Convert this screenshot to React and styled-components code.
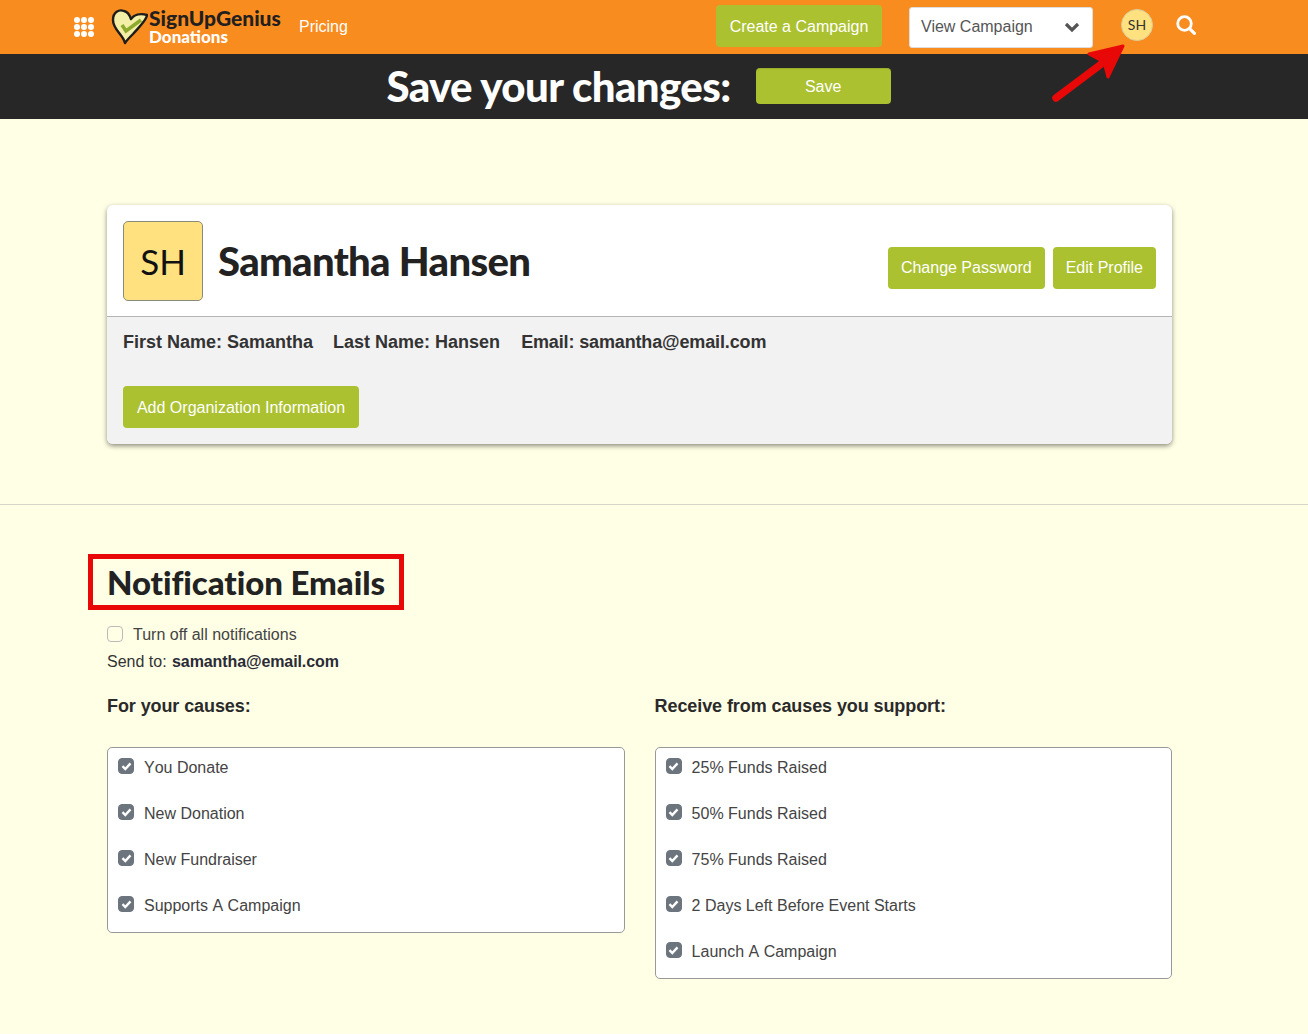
import React from 'react';
import styled, { createGlobalStyle } from 'styled-components';

const GlobalStyle = createGlobalStyle`
  html, body {
    margin: 0;
    padding: 0;
    background: #ffffe6;
    color: #333;
    font-family: "Liberation Sans", Arial, sans-serif;
    font-size: 16px;
  }
  * { box-sizing: border-box; }
`;

const Page = styled.div`
  position: relative;
  width: 1308px;
  height: 1034px;
  overflow: hidden;
`;

const TopBar = styled.header`
  display: flex;
  align-items: center;
  height: 54px;
  padding: 0 112px 0 74px;
  background: #f98c1f;
`;

const LogoWrap = styled.div`
  display: flex;
  align-items: center;
  margin-left: 16px;
  width: 172px;
`;

const LogoText = styled.div`
  display: flex;
  flex-direction: column;
  margin-left: 1px;
  font-family: Lato, sans-serif;
  font-weight: 900;
`;

const LogoName = styled.span`
  color: #231f20;
  font-size: 21px;
  line-height: 20px;
  white-space: nowrap;
`;

const LogoSub = styled.span`
  color: #fff;
  font-size: 17px;
  line-height: 18px;
`;

const PricingLink = styled.a`
  margin-left: 17px;
  color: #fff;
  white-space: nowrap;
`;

const Button = styled.button`
  height: ${p => p.$h || 42}px;
  width: ${p => (p.$w ? `${p.$w}px` : 'auto')};
  margin-top: ${p => p.$mt || 0}px;
  padding: 1px 13px 0;
  border: 0;
  border-radius: 4px;
  background: #abc130;
  color: #fff;
  font: 16px "Liberation Sans", Arial, sans-serif;
  white-space: nowrap;
`;

const SaveButton = styled(Button)`
  padding-top: 0;
  border-top: 1px solid #9ab02a;
`;

const RightGroup = styled.div`
  display: flex;
  align-items: center;
  margin-left: auto;
`;

const SelectBox = styled.div`
  display: flex;
  align-items: center;
  justify-content: space-between;
  width: 184px;
  height: 41px;
  margin-left: 27px;
  padding: 0 12px 0 11px;
  background: #fff;
  border: 1px solid #ddd;
  border-radius: 3px;
  color: #555;
`;

const HeaderAvatar = styled.div`
  display: flex;
  align-items: center;
  justify-content: center;
  width: 32px;
  height: 32px;
  margin-left: 28px;
  margin-top: -4px;
  padding-bottom: 2px;
  border-radius: 50%;
  border: 1px solid #d9cc9a;
  background: #ffe27f;
  color: #333;
  font-family: Lato, sans-serif;
  font-size: 14px;
`;

const SearchBtn = styled.span`
  display: flex;
  margin-left: 23px;
  margin-top: -5px;
`;

const SaveBar = styled.div`
  display: flex;
  align-items: center;
  justify-content: center;
  gap: 25px;
  height: 65px;
  padding: 0 31px 1px 0;
  background: #272727;
`;

const SaveTitle = styled.h2`
  margin: 0;
  color: #fff;
  font-family: Lato, sans-serif;
  font-size: 42px;
  font-weight: 900;
  letter-spacing: -0.6px;
`;

const ProfileSection = styled.section`
  padding: 86px 136px 60px 107px;
  border-bottom: 1px solid #d6d6c8;
`;

const Card = styled.div`
  background: #fff;
  border-radius: 6px;
  box-shadow: 0 2px 5px rgba(0, 0, 0, 0.45);
  overflow: hidden;
`;

const CardTop = styled.div`
  display: flex;
  align-items: center;
  height: 112px;
  padding: 0 16px;
  border-bottom: 1px solid #b5b5b5;
`;

const BigAvatar = styled.div`
  display: flex;
  align-items: center;
  justify-content: center;
  width: 80px;
  height: 80px;
  border: 1px solid #8a8a7a;
  border-radius: 5px;
  background: #ffe27f;
  color: #111;
  font-family: Lato, sans-serif;
  font-size: 35px;
`;

const UserName = styled.h1`
  margin: 0 0 0 15px;
  color: #222;
  font-family: Lato, sans-serif;
  font-size: 40px;
  font-weight: 900;
  letter-spacing: -0.65px;
`;

const CardActions = styled.div`
  display: flex;
  gap: 8px;
  margin-left: auto;
  margin-top: 14px;
`;

const CardBottom = styled.div`
  height: 127px;
  padding: 14px 16px 0;
  background: #f2f2f2;
`;

const InfoRow = styled.div`
  display: flex;
  gap: 20px;
  margin-bottom: 33px;
  color: #333;
  font-size: 18px;
  font-weight: 700;
  line-height: 22px;
`;

const InfoEmail = styled.span`
  margin-left: 1px;
  letter-spacing: -0.14px;
`;

const NotifySection = styled.section`
  padding: 58px 136px 0 107px;
`;

const SectionTitle = styled.h2`
  margin: 0 0 24px;
  color: #222;
  font-family: Lato, sans-serif;
  font-size: 33px;
  font-weight: 900;
  line-height: 38px;
  letter-spacing: -0.08px;
`;

const TurnOffRow = styled.label`
  display: flex;
  align-items: center;
  gap: 10px;
  height: 20px;
  color: #444;
`;

const Check = styled.span`
  display: flex;
  align-items: center;
  justify-content: center;
  flex: none;
  width: 16px;
  height: 16px;
  margin-top: ${p => (p.$on ? 0 : -3)}px;
  border-radius: 4px;
  border: 1px solid ${p => (p.$on ? '#6c757d' : '#b9b9b9')};
  background: ${p => (p.$on ? '#6c757d' : 'transparent')};
`;

const SendTo = styled.div`
  margin-top: 7px;
  color: #333;
  line-height: 20px;
`;

const SendEmail = styled.strong`
  margin-left: 1px;
  color: #2b2b36;
  letter-spacing: -0.1px;
`;

const Columns = styled.div`
  display: grid;
  grid-template-columns: 518px 517.4px;
  gap: 29.6px;
  margin-top: 23px;
`;

const ColumnTitle = styled.h3`
  margin: 0 0 30px;
  color: #2a2a2a;
  font-size: 18px;
  font-weight: 700;
  line-height: 22px;
  letter-spacing: -0.09px;
`;

const OptionBox = styled.div`
  display: flex;
  flex-direction: column;
  padding: 0 10px;
  background: #fff;
  border: 1px solid #999;
  border-radius: 5px;
`;

const OptionRow = styled.label`
  display: flex;
  align-items: flex-start;
  gap: 10px;
  height: 46px;
  padding-top: 10px;
  color: #444;
  line-height: 20px;
  font-kerning: none;
`;

const Annotation = styled.div`
  position: absolute;
  left: 88px;
  top: 554px;
  width: 316px;
  height: 56px;
  border: 5px solid #e80808;
`;

const ArrowMark = styled.svg`
  position: absolute;
  left: 1050px;
  top: 42px;
`;

const causes = ['You Donate', 'New Donation', 'New Fundraiser', 'Supports A Campaign'];
const support = [
  '25% Funds Raised',
  '50% Funds Raised',
  '75% Funds Raised',
  '2 Days Left Before Event Starts',
  'Launch A Campaign',
];

const Tick = () => (
  <svg width="11" height="10" viewBox="0 0 11 10">
    <path d="M1.5 5.2 L4.3 8 L9.5 2.4" fill="none" stroke="#fff" strokeWidth="2.4" />
  </svg>
);

const OptionList = ({ items }) => (
  <OptionBox>
    {items.map(item => (
      <OptionRow key={item}>
        <Check $on>
          <Tick />
        </Check>
        {item}
      </OptionRow>
    ))}
  </OptionBox>
);

const Logo = () => (
  <svg width="38" height="44" viewBox="0 0 38 44">
    <path
      d="M15 38 C13 29 3 25 3 15 C3 7 9 4 14 6 C18 7 20 11 21 14 C24 10 30 8 37 10 C37 15 28 23 23 29 C20 32 17 35 15 38 Z"
      fill="#f4efa6"
      stroke="#1d1d1b"
      strokeWidth="2.4"
      strokeLinejoin="round"
    />
    <path d="M12 20 L16 26 L31 15" fill="none" stroke="#8cab2e" strokeWidth="3.6" />
  </svg>
);

const App = () => (
  <Page>
    <GlobalStyle />
    <TopBar>
      <svg width="20" height="20" viewBox="0 0 20 20" fill="#fff">
        {[3, 10, 17].map(y =>
          [3, 10, 17].map(x => <circle key={`${x}-${y}`} cx={x} cy={y} r="3" />)
        )}
      </svg>
      <LogoWrap>
        <Logo />
        <LogoText>
          <LogoName>SignUpGenius</LogoName>
          <LogoSub>Donations</LogoSub>
        </LogoText>
      </LogoWrap>
      <PricingLink>Pricing</PricingLink>
      <RightGroup>
        <Button $w={166} $mt={-2}>Create a Campaign</Button>
        <SelectBox>
          View Campaign
          <svg width="16" height="11" viewBox="0 0 16 11">
            <path d="M2 2 L8 8 L14 2" fill="none" stroke="#555" strokeWidth="3.2" />
          </svg>
        </SelectBox>
        <HeaderAvatar>SH</HeaderAvatar>
        <SearchBtn>
          <svg width="20" height="20" viewBox="0 0 20 20">
            <circle cx="8.5" cy="8.5" r="6.8" fill="none" stroke="#fff" strokeWidth="2.8" />
            <path d="M13.6 13.6 L18.4 18.4" stroke="#fff" strokeWidth="3.2" strokeLinecap="round" />
          </svg>
        </SearchBtn>
      </RightGroup>
    </TopBar>
    <SaveBar>
      <SaveTitle>Save your changes:</SaveTitle>
      <SaveButton $w={135} $h={36}>Save</SaveButton>
    </SaveBar>

    <ProfileSection>
      <Card>
        <CardTop>
          <BigAvatar>SH</BigAvatar>
          <UserName>Samantha Hansen</UserName>
          <CardActions>
            <Button>Change Password</Button>
            <Button>Edit Profile</Button>
          </CardActions>
        </CardTop>
        <CardBottom>
          <InfoRow>
            <span>First Name: Samantha</span>
            <span>Last Name: Hansen</span>
            <InfoEmail>Email: samantha@email.com</InfoEmail>
          </InfoRow>
          <Button $w={236}>Add Organization Information</Button>
        </CardBottom>
      </Card>
    </ProfileSection>

    <NotifySection>
      <SectionTitle>Notification Emails</SectionTitle>
      <TurnOffRow>
        <Check />
        Turn off all notifications
      </TurnOffRow>
      <SendTo>
        Send to: <SendEmail>samantha@email.com</SendEmail>
      </SendTo>
      <Columns>
        <div>
          <ColumnTitle>For your causes:</ColumnTitle>
          <OptionList items={causes} />
        </div>
        <div>
          <ColumnTitle>Receive from causes you support:</ColumnTitle>
          <OptionList items={support} />
        </div>
      </Columns>
    </NotifySection>

    <Annotation />
    <ArrowMark width="80" height="64" viewBox="0 0 80 64">
      <path d="M6 56 L54 20" fill="none" stroke="#e80808" strokeWidth="7.5" strokeLinecap="round" />
      <path
        d="M39 12 L73 4 L58 35 L54 20 Z"
        fill="#e80808"
        stroke="#e80808"
        strokeWidth="3"
        strokeLinejoin="round"
      />
    </ArrowMark>
  </Page>
);

export default App;
